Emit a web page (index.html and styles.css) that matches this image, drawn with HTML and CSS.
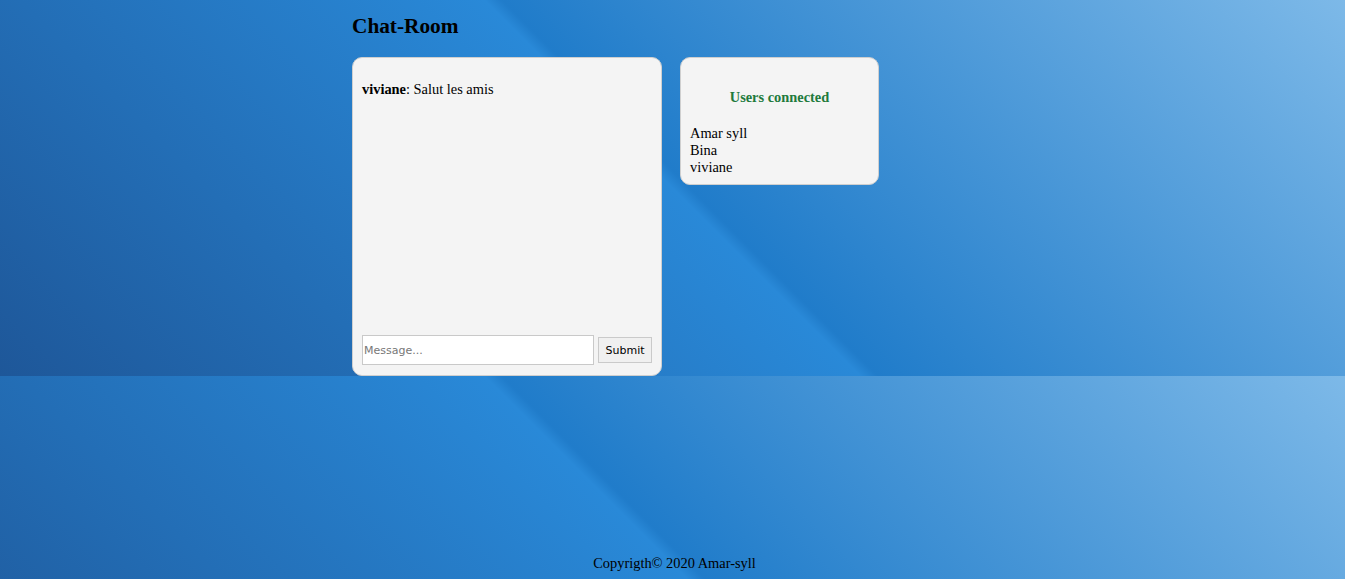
FILE: index.html
```html
<!DOCTYPE html>
<html lang="fr">
<head>
<meta charset="utf-8">
<title>Chat-Room</title>
<link rel="stylesheet" href="styles.css">
</head>
<body>
<main class="page">
  <h2 class="title">Chat-Room</h2>
  <div class="panels">
    <section class="chat">
      <div class="messages">
        <p class="message"><strong>viviane</strong>: Salut les amis</p>
      </div>
      <form class="send">
        <input class="send-input" type="text" placeholder="Message...">
        <button class="send-btn" type="button">Submit</button>
      </form>
    </section>
    <aside class="users">
      <h4 class="users-title">Users connected</h4>
      <ul class="users-list">
        <li>Amar syll</li>
        <li>Bina</li>
        <li>viviane</li>
      </ul>
    </aside>
  </div>
</main>
<footer class="footer">Copyrigth© 2020 Amar-syll</footer>
</body>
</html>
```

FILE: styles.css
```css
html {
  background: linear-gradient(45deg, #1e5799 0%, #2989d8 50%, #207cca 51%, #7db9e8 100%) 0 0 / 100% 376px repeat;
}

body {
  margin: 0;
  min-height: 100vh;
  display: flex;
  flex-direction: column;
  font-family: "Liberation Serif", "Times New Roman", serif;
  font-size: 14.4px;
  line-height: 17px;
  color: #000;
}

.page {
  width: 641px;
  margin: 0 auto;
}

.title {
  font-size: 21.3px;
  line-height: 24px;
  font-weight: bold;
  margin: 14px 0 19px;
}

.panels {
  display: flex;
  align-items: flex-start;
  gap: 18px;
}

.chat {
  box-sizing: border-box;
  width: 310px;
  height: 319px;
  padding: 9px;
  background: #f4f4f4;
  border: 1px solid #cfcfcf;
  border-radius: 10px;
  display: flex;
  flex-direction: column;
}

.messages {
  flex: 1;
}

.message {
  margin: 14px 0 0;
}

.send {
  display: flex;
  align-items: center;
  gap: 4px;
  margin: 0 0 1px;
}

.send-input {
  box-sizing: border-box;
  width: 232px;
  height: 30px;
  margin: 0;
  padding: 0 1px;
  border: 1px solid #c9c9c9;
  background: #fff;
  font-family: "DejaVu Sans", Verdana, sans-serif;
  font-size: 11px;
  outline: none;
}

.send-input::placeholder {
  color: #777;
}

.send-btn {
  box-sizing: border-box;
  width: 54px;
  height: 26px;
  margin: 0;
  padding: 0;
  border: 1px solid #cacaca;
  background: #f0f0f0;
  color: #000;
  font-family: "DejaVu Sans", Verdana, sans-serif;
  font-size: 11px;
}

.users {
  box-sizing: border-box;
  width: 199px;
  padding: 9px 9px 8px;
  background: #f4f4f4;
  border: 1px solid #cfcfcf;
  border-radius: 10px;
}

.users-title {
  margin: 22px 0 19px;
  text-align: center;
  font-size: 14.4px;
  font-weight: bold;
  color: #217a3c;
}

.users-list {
  list-style: none;
  margin: 0;
  padding: 0;
}

.footer {
  margin-top: auto;
  text-align: center;
  padding: 0 0 7px 4px;
}
```
